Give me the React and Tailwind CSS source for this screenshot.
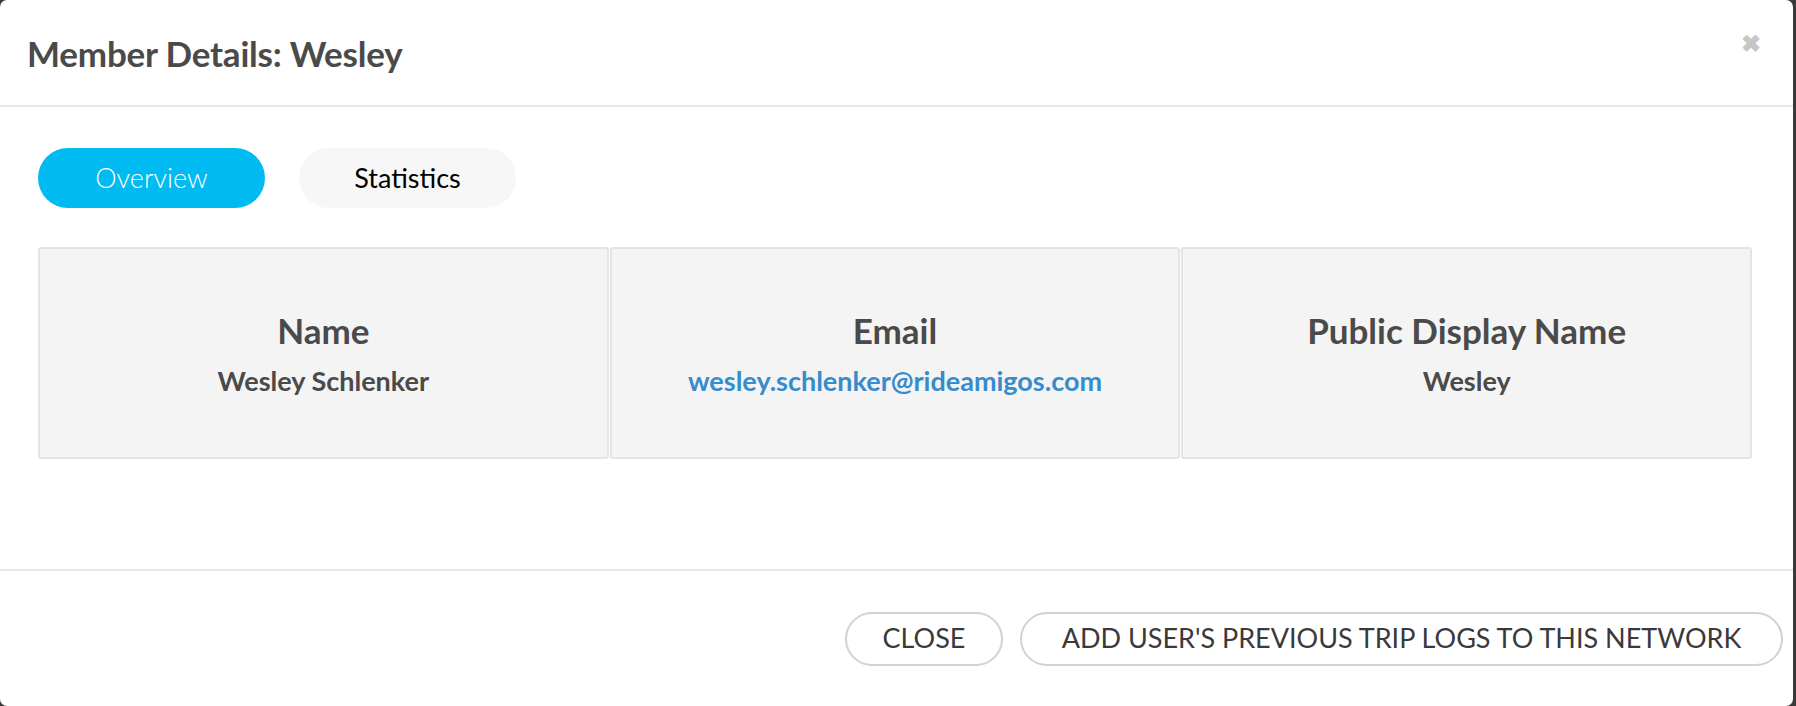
import React from 'react';

const cards = [
  { label: 'Name', value: 'Wesley Schlenker' },
  { label: 'Email', value: 'wesley.schlenker@rideamigos.com', link: true },
  { label: 'Public Display Name', value: 'Wesley' },
];

export default function App() {
  const [tab, setTab] = React.useState('overview');

  return (
    <div className="w-[1796px] h-[706px] bg-[#3a3a3a] overflow-hidden font-['Lato',sans-serif]">
      <div className="w-[1793px] h-[706px] bg-white rounded-[7px] flex flex-col">
        {/* header */}
        <div className="h-[107px] flex items-center justify-between pl-[27px] pr-[32px] border-b-2 border-[#e6e6e6]">
          <h2 className="text-[35px] font-bold text-[#4a4a4a] tracking-[-0.2px] pt-[2px]">Member Details: Wesley</h2>
          <button className="text-[#c6c6c6] text-[24px] font-bold leading-none mb-[20px]">&#x2716;</button>
        </div>

        {/* body */}
        <div className="flex-1 pl-[38px] pr-[41px] pt-[41px]">
          <div className="flex gap-[34px]">
            <button
              onClick={() => setTab('overview')}
              className={`w-[227px] h-[60px] rounded-full text-[27px] font-light ${tab === 'overview' ? 'bg-[#00baf2] text-white' : 'bg-[#f7f7f7] text-black'}`}
            >
              Overview
            </button>
            <button
              onClick={() => setTab('statistics')}
              className={`w-[217px] h-[60px] rounded-full text-[27px] ${tab === 'statistics' ? 'bg-[#00baf2] text-white' : 'bg-[#f7f7f7] text-black'}`}
            >
              Statistics
            </button>
          </div>

          <div className="grid grid-cols-3 gap-[1px] mt-[39px]">
            {cards.map((c) => (
              <div
                key={c.label}
                className="h-[212px] bg-[#f4f4f4] border-2 border-[#e4e4e4] rounded-[3px] flex flex-col items-center justify-center"
              >
                <div className="text-[35px] font-bold text-[#4a4a4a] leading-[42px]">{c.label}</div>
                <div className={`text-[27px] font-bold leading-[32px] mt-[14px] ${c.link ? 'text-[#368ccc]' : 'text-[#4a4a4a]'}`}>
                  {c.value}
                </div>
              </div>
            ))}
          </div>
        </div>

        {/* footer */}
        <div className="h-[137px] border-t-2 border-[#e6e6e6] flex items-center justify-end gap-[17px] pr-[10px]">
          <button className="w-[158px] h-[54px] rounded-full border-2 border-[#d2d2d2] text-[27px] text-[#3a3a3a] uppercase">
            Close
          </button>
          <button className="w-[763px] h-[54px] rounded-full border-2 border-[#d2d2d2] text-[27px] text-[#3a3a3a] uppercase">
            Add user's previous trip logs to this network
          </button>
        </div>
      </div>
    </div>
  );
}
